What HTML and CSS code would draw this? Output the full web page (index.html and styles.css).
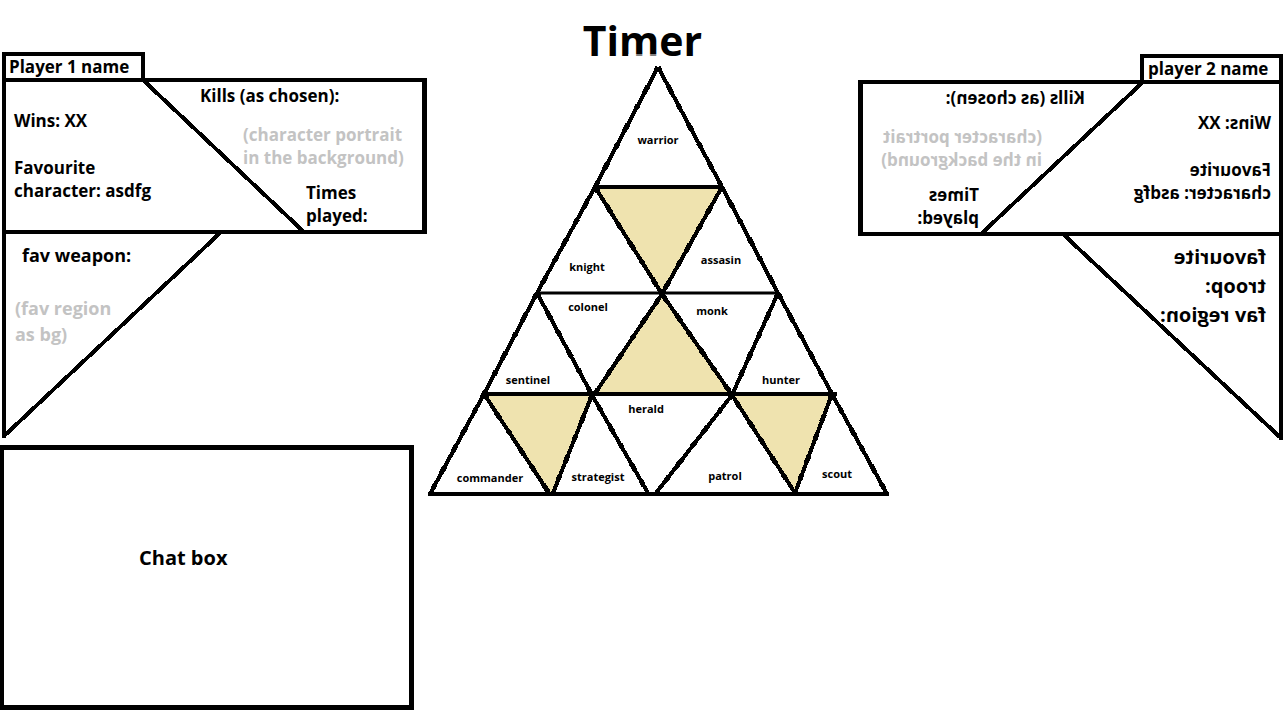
FILE: index.html
```html
<!DOCTYPE html>
<html lang="en">
<head>
<meta charset="utf-8">
<title>Match screen</title>
<link rel="stylesheet" href="styles.css">
</head>
<body>
<main class="match">
  <div class="side">
    <section class="player">
      <h2 class="player-tab"><span class="player-name">Player 1 name</span></h2>
      <div class="card">
        <svg class="slash" viewBox="0 0 416 148" preserveAspectRatio="none" aria-hidden="true"><line x1="137" y1="-2" x2="298" y2="150"/></svg>
        <div class="profile">
          <p>Wins: XX</p>
          <p>Favourite<br>character: asdfg</p>
        </div>
        <div class="stats">
          <p>Kills (as chosen):</p>
          <p class="portrait">(character portrait<br>in the background)</p>
          <p class="times">Times<br>played:</p>
        </div>
      </div>
      <div class="wing">
        <svg class="slash" viewBox="0 0 421 204" preserveAspectRatio="none" aria-hidden="true"><line x1="214" y1="-1" x2="-3" y2="203"/></svg>
        <div class="wing-text">
          <p class="weapon">fav weapon:</p>
          <p class="region">(fav region<br>as bg)</p>
        </div>
      </div>
    </section>
    <section class="chat"><h2 class="chat-title">Chat box</h2></section>
  </div>

  <div class="center">
    <h1 class="timer">Timer</h1>
    <svg class="board" viewBox="427 65 463 432" role="img" aria-label="Troop board">
      <path class="nick" d="M628 55H660"/>
      <g class="tiles">
        <path d="M595 187H722L662 294Z"/>
        <path d="M662 294L732 395H594Z"/>
        <path d="M484 394H592L553 494H549Z"/>
        <path d="M732 394H832L795 494Z"/>
      </g>
      <path class="rows" d="M593 187H722M484 394H837M428 494H889"/>
      <path class="rows row-thin" d="M537 293H778"/>
      <g class="edges">
        <path d="M658 67L595 187L537 293L484 394L430 494"/>
        <path d="M658 67L722 187L778 293L832 394L887 494"/>
        <path d="M595 187L662 294L732 395L795 493"/>
        <path d="M722 187L662 294L594 395"/>
        <path d="M592 395L553 493"/>
        <path d="M537 293L592 395L648 493"/>
        <path d="M778 293L732 395L656 493"/>
        <path d="M484 394L549 493"/>
        <path d="M832 394L795 493"/>
      </g>
      <g class="knots">
        <path d="M658 67L595 187L537 293L484 394L430 494"/>
        <path d="M658 67L722 187L778 293L832 394L887 494"/>
        <path d="M595 187L662 294L732 395L795 493"/>
        <path d="M722 187L662 294L594 395"/>
        <path d="M592 395L553 493"/>
        <path d="M537 293L592 395L648 493"/>
        <path d="M778 293L732 395L656 493"/>
        <path d="M484 394L549 493"/>
        <path d="M832 394L795 493"/>
      </g>
      <g class="labels">
        <text x="658" y="144">warrior</text>
        <text x="587" y="271">knight</text>
        <text x="721" y="264">assasin</text>
        <text x="588" y="311">colonel</text>
        <text x="712" y="315">monk</text>
        <text x="528" y="384">sentinel</text>
        <text x="781" y="384">hunter</text>
        <text x="646" y="413">herald</text>
        <text x="490" y="482">commander</text>
        <text x="598" y="481">strategist</text>
        <text x="725" y="480">patrol</text>
        <text x="837" y="478">scout</text>
      </g>
    </svg>
  </div>

  <div class="side side-mirrored">
    <section class="player">
      <h2 class="player-tab"><span class="player-name">player 2 name</span></h2>
      <div class="card">
        <svg class="slash" viewBox="0 0 416 148" preserveAspectRatio="none" aria-hidden="true"><line x1="136" y1="-2" x2="298" y2="150"/></svg>
        <div class="profile">
          <p>Wins: XX</p>
          <p>Favourite<br>character: asdfg</p>
        </div>
        <div class="stats">
          <p>Kills (as chosen):</p>
          <p class="portrait">(character portrait<br>in the background)</p>
          <p class="times">Times<br>played:</p>
        </div>
      </div>
      <div class="wing">
        <svg class="slash" viewBox="0 0 421 204" preserveAspectRatio="none" aria-hidden="true"><line x1="215" y1="-1" x2="-3" y2="203"/></svg>
        <div class="wing-text wing-text-large">
          <p>favourite<br>troop:<br>fav region:</p>
        </div>
      </div>
    </section>
  </div>
</main>
</body>
</html>
```
FILE: styles.css
```css
* { box-sizing: border-box; }
body {
  margin: 0;
  background: #fff;
  color: #000;
  font: 700 17px/23px "Open Sans", "Noto Sans", sans-serif;
  overflow-x: hidden;
}
h1, h2, p { margin: 0; font-weight: 700; }

.match {
  display: grid;
  grid-template-columns: 427fr 431fr 426fr;
  align-items: start;
}

.side { padding-top: 52px; }
.player { padding-left: 2px; }
.side-mirrored { padding-top: 54px; transform: scaleX(-1); }
.side-mirrored .player { padding-left: 1px; }
.side-mirrored .player-name { display: block; transform: scaleX(-1); }

.player-tab {
  width: 143px;
  padding: 0 4px 0 3px;
  border: 4px solid #000;
  border-bottom: 0;
  font-size: 17px;
  line-height: 22px;
  white-space: nowrap;
}

.card {
  display: grid;
  grid-template-columns: 194fr 222fr;
  border: 4px solid #000;
  border-right-width: 5px;
}
.slash {
  grid-area: 1 / 1 / 2 / -1;
  width: 100%;
  height: 100%;
  overflow: visible;
  stroke: #000;
  stroke-width: 4;
  shape-rendering: crispEdges;
}
.profile {
  grid-area: 1 / 1;
  display: flex;
  flex-direction: column;
  gap: 24px;
  padding: 27px 0 0 8px;
}
.stats { grid-area: 1 / 2; padding: 2px 0 3px; }
.portrait { margin: 16px 0 12px 43px; color: #c3c3c3; }
.times { margin-left: 106px; }

.wing {
  display: grid;
  grid-template-columns: 1fr;
  min-height: 204px;
  border-left: 4px solid #000;
}
.wing-text {
  grid-area: 1 / 1;
  padding: 8px 0 0 9px;
  font-size: 18px;
  line-height: 26px;
}
.weapon { padding-left: 7px; }
.region { margin-top: 27px; color: #c3c3c3; }
.wing-text-large { padding: 6px 0 0 13px; font-size: 20px; line-height: 29px; }

.chat {
  width: 97%;
  min-height: 265px;
  margin-top: 7px;
  padding: 95px 0 0 135px;
  border: 5px solid #000;
  border-left-width: 4px;
}
.chat-title { font-size: 20px; line-height: 26px; }

.center { padding-top: 15px; }
.timer { font-size: 41px; line-height: 50px; text-align: center; }
.board {
  display: block;
  width: calc(100% + 32px);
  overflow: visible;
}
.nick { stroke: #fff; stroke-width: 1; }
.tiles { fill: #efe3af; }
.rows { fill: none; stroke: #000; stroke-width: 4; }
.row-thin { stroke-width: 3; }
.edges, .knots {
  fill: none;
  stroke: #000;
  stroke-width: 4;
  stroke-linejoin: round;
  shape-rendering: crispEdges;
}
.knots { stroke-width: 5; stroke-dasharray: 5 17 8 13; }
.labels { font-size: 11px; text-anchor: middle; }
```
